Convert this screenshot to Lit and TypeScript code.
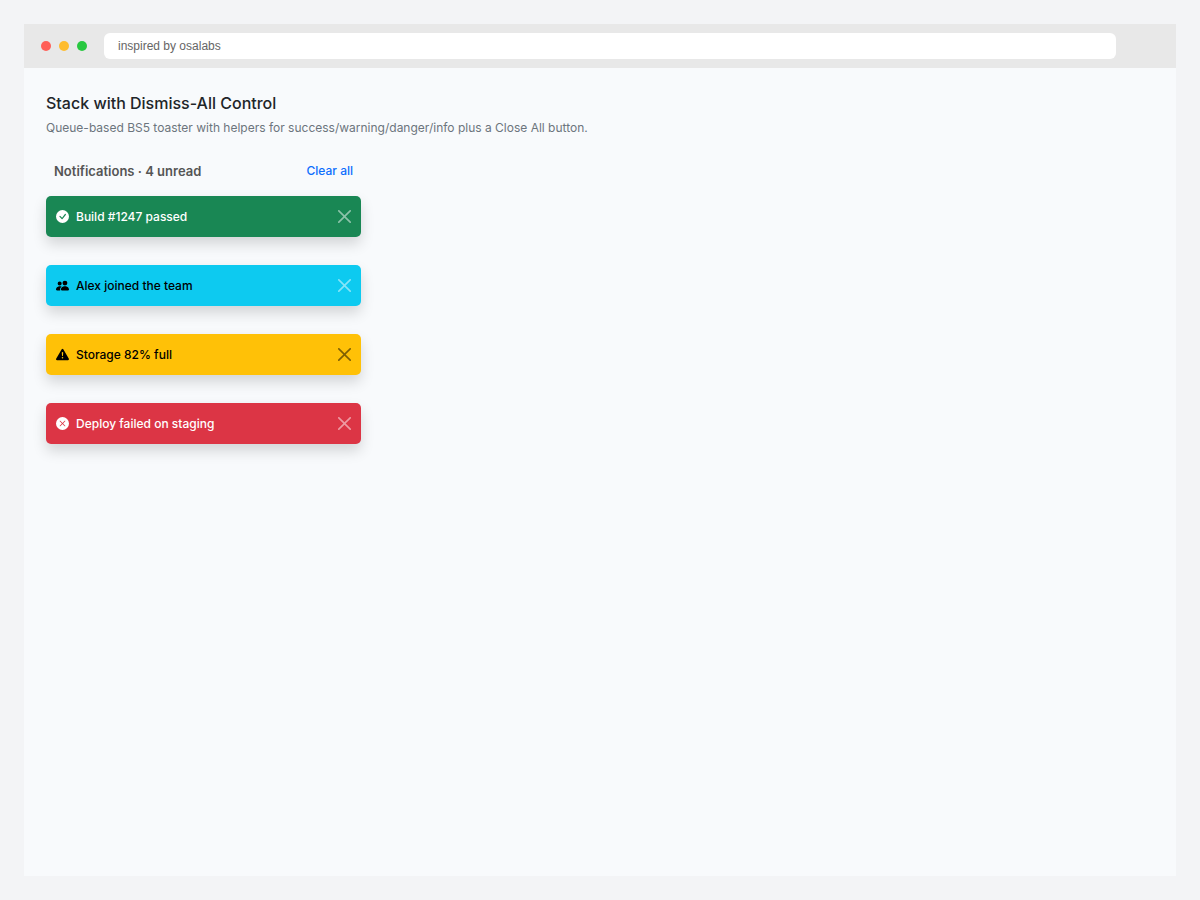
import { LitElement, html, css, svg } from "lit";
import { customElement, property, state } from "lit/decorators.js";

type Kind = "success" | "info" | "warning" | "danger";

interface Notice {
  kind: Kind;
  text: string;
}

const ICONS = {
  success: svg`<path d="M16 8A8 8 0 1 1 0 8a8 8 0 0 1 16 0m-3.97-3.03a.75.75 0 0 0-1.08.022L7.477 9.417 5.384 7.323a.75.75 0 0 0-1.06 1.06L6.97 11.03a.75.75 0 0 0 1.079-.02l3.992-4.99a.75.75 0 0 0-.01-1.05z"/>`,
  info: svg`<path d="M7 14s-1 0-1-1 1-4 5-4 5 3 5 4-1 1-1 1zm4-6a3 3 0 1 0 0-6 3 3 0 0 0 0 6m-5.784 6A2.24 2.24 0 0 1 5 13c0-1.355.68-2.75 1.936-3.72A6.3 6.3 0 0 0 5 9c-4 0-5 3-5 4s1 1 1 1zM4.5 8a2.5 2.5 0 1 0 0-5 2.5 2.5 0 0 0 0 5"/>`,
  warning: svg`<path d="M8.982 1.566a1.13 1.13 0 0 0-1.96 0L.165 13.233c-.457.778.091 1.767.98 1.767h13.713c.889 0 1.438-.99.98-1.767zM8 5c.535 0 .954.462.9.995l-.35 3.507a.552.552 0 0 1-1.1 0L7.1 5.995A.905.905 0 0 1 8 5m.002 6a1 1 0 1 1 0 2 1 1 0 0 1 0-2"/>`,
  danger: svg`<path d="M16 8A8 8 0 1 1 0 8a8 8 0 0 1 16 0M5.354 4.646a.5.5 0 1 0-.708.708L7.293 8l-2.647 2.646a.5.5 0 0 0 .708.708L8 8.707l2.646 2.647a.5.5 0 0 0 .708-.708L8.707 8l2.647-2.646a.5.5 0 0 0-.708-.708L8 7.293z"/>`,
};

@customElement("toast-item")
export class ToastItem extends LitElement {
  @property({ reflect: true }) kind: Kind = "success";
  @property() text = "";

  static styles = css`
    :host {
      display: flex;
      align-items: center;
      box-sizing: border-box;
      min-height: 41px;
      padding: 0 10px;
      border-radius: 5px;
      font-size: 12px;
      line-height: 20px;
      font-weight: 500;
      color: #fff;
      box-shadow: 0 7px 14px rgba(0, 0, 0, 0.15);
    }
    :host([kind="success"]) { background: #198754; }
    :host([kind="info"]) { background: #0dcaf0; color: #000; }
    :host([kind="warning"]) { background: #ffc107; color: #000; }
    :host([kind="danger"]) { background: #dc3545; }
    .icon {
      width: 13px;
      height: 13px;
      flex: none;
      margin-right: 7px;
      fill: currentColor;
    }
    .text { flex: 1; }
    .close {
      display: flex;
      padding: 0;
      border: 0;
      background: none;
      color: #fff;
      opacity: 0.5;
      cursor: pointer;
    }
    :host([kind="warning"]) .close { color: #000; }
    .close svg {
      width: 13px;
      height: 13px;
      fill: currentColor;
    }
  `;

  private dismiss() {
    this.dispatchEvent(new CustomEvent("dismiss"));
  }

  render() {
    return html`
      <svg class="icon" viewBox="0 0 16 16" aria-hidden="true">${ICONS[this.kind]}</svg>
      <span class="text">${this.text}</span>
      <button class="close" type="button" aria-label="Close" @click=${this.dismiss}>
        <svg viewBox="0 0 16 16" aria-hidden="true">
          <path d="M.293.293a1 1 0 0 1 1.414 0L8 6.586 14.293.293a1 1 0 1 1 1.414 1.414L9.414 8l6.293 6.293a1 1 0 0 1-1.414 1.414L8 9.414l-6.293 6.293a1 1 0 0 1-1.414-1.414L6.586 8 .293 1.707a1 1 0 0 1 0-1.414z"/>
        </svg>
      </button>
    `;
  }
}

@customElement("app-root")
export class AppRoot extends LitElement {
  @state() private notices: Notice[] = [
    { kind: "success", text: "Build #1247 passed" },
    { kind: "info", text: "Alex joined the team" },
    { kind: "warning", text: "Storage 82% full" },
    { kind: "danger", text: "Deploy failed on staging" },
  ];

  static styles = css`
    :host {
      display: flex;
      box-sizing: border-box;
      min-height: 100vh;
      padding: 24px;
      background: #f3f4f6;
      font-family: Inter, "Liberation Sans", sans-serif;
      color: #212529;
    }
    .window {
      flex: 1;
      display: flex;
      flex-direction: column;
      min-width: 0;
      background: #f8fafc;
    }
    .bar {
      display: flex;
      align-items: center;
      gap: 8px;
      padding: 9px 60px 9px 17px;
      background: #e8e8e8;
    }
    .dot {
      width: 10px;
      height: 10px;
      border-radius: 50%;
    }
    .red { background: #ff5f57; }
    .amber { background: #febc2e; }
    .green { background: #28c840; }
    .address {
      flex: 1;
      min-width: 0;
      box-sizing: border-box;
      height: 26px;
      margin-left: 9px;
      padding: 0 14px;
      border: 0;
      border-radius: 6px;
      background: #fff;
      font: 12px "Liberation Sans", Arial, sans-serif;
      color: #666;
    }
    .page { padding: 23px 22px; }
    h1 {
      margin: 0;
      font-size: 16px;
      line-height: 24px;
      font-weight: 500;
    }
    .lead {
      margin: 3px 0 0;
      font-size: 12px;
      line-height: 20px;
      color: #6c757d;
    }
    .stack { max-width: 315px; }
    .head {
      display: flex;
      justify-content: space-between;
      padding: 0 8px;
      margin: 23px 0 15px;
      line-height: 20px;
    }
    h2 {
      margin: 0;
      font-size: 13px;
      font-weight: 600;
      color: #555;
    }
    .clear {
      padding: 0;
      border: 0;
      background: none;
      font: inherit;
      font-size: 12px;
      font-weight: 500;
      color: #0d6efd;
      cursor: pointer;
    }
    .list {
      display: grid;
      gap: 28px;
    }
  `;

  private remove(notice: Notice) {
    this.notices = this.notices.filter((n) => n !== notice);
  }

  private clear() {
    this.notices = [];
  }

  render() {
    return html`
      <div class="window">
        <header class="bar">
          <span class="dot red"></span>
          <span class="dot amber"></span>
          <span class="dot green"></span>
          <input class="address" type="text" aria-label="Address" value="inspired by osalabs" />
        </header>
        <main class="page">
          <h1>Stack with Dismiss-All Control</h1>
          <p class="lead">Queue-based BS5 toaster with helpers for success/warning/danger/info plus a Close All button.</p>
          <section class="stack">
            <div class="head">
              <h2>Notifications · ${this.notices.length} unread</h2>
              <button class="clear" type="button" @click=${this.clear}>Clear all</button>
            </div>
            <div class="list">
              ${this.notices.map(
                (n) => html`<toast-item .kind=${n.kind} .text=${n.text} @dismiss=${() => this.remove(n)}></toast-item>`
              )}
            </div>
          </section>
        </main>
      </div>
    `;
  }
}
